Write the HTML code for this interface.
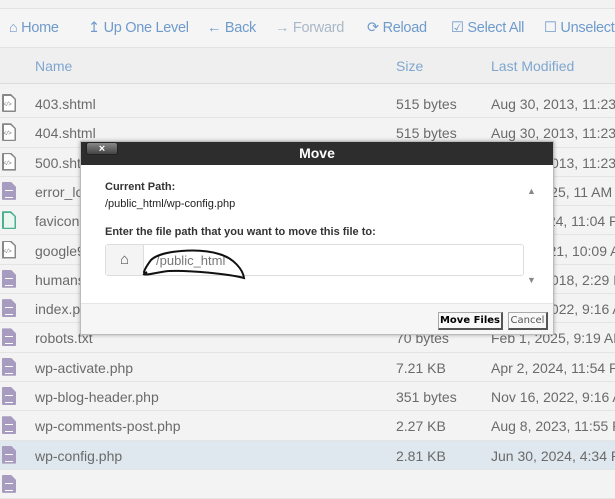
<!DOCTYPE html>
<html><head><style>
*{margin:0;padding:0;box-sizing:border-box}
body{width:615px;height:480px;overflow:hidden;background:#f2f2f2;font-family:"Liberation Sans",sans-serif;position:relative}
.tb{position:absolute;left:0;top:8px;width:615px;height:40px;background:#f5f5f5;border-top:1px solid #e2e2e2;border-bottom:1px solid #e2e2e2}
.tb span{position:absolute;top:11px;font-size:14.5px;color:#6f9bcc;letter-spacing:-0.3px;white-space:nowrap}
.tb span.dis{color:#a9b8c8}
.hd{position:absolute;left:0;top:48px;width:615px;height:36px;background:#efefef;border-bottom:1px solid #dcdcdc}
.hd span{position:absolute;top:10px;font-size:14px;color:#7fa6cf}
.row{position:absolute;left:0;width:615px;height:29.3px;border-bottom:1px solid #e4e4e4;background:#f3f3f3;font-size:14px;color:#6a6a6a}
.row.sel{background:#dfe8ee}
.row span{position:absolute;top:7px;white-space:nowrap}
.ic{position:absolute;left:2px;top:5px;width:14px;height:18px;border-radius:1px;clip-path:polygon(0 0,65% 0,100% 28%,100% 100%,0 100%)}
.doc{background:#a79bbf}
.doc:after{content:"";position:absolute;left:3px;top:8px;width:8px;height:6px;border-top:1.5px solid #fff;border-bottom:1.5px solid #fff}
.code{background:#888}
.code:before{content:"";position:absolute;left:1.5px;top:1.5px;right:1.5px;bottom:1.5px;background:#fff;clip-path:polygon(0 0,60% 0,100% 26%,100% 100%,0 100%)}
.code:after{content:"</>";position:absolute;left:1px;top:8px;font-size:6px;color:#777}
.img{background:#4bb08f}
.img:before{content:"";position:absolute;left:1.5px;top:1.5px;right:1.5px;bottom:1.5px;background:#eaf6f0;clip-path:polygon(0 0,60% 0,100% 26%,100% 100%,0 100%)}
.dlg{position:absolute;left:80px;top:141px;width:474px;height:194px;background:#fff;border:1px solid #bbb;box-shadow:0 0 4px rgba(0,0,0,.3)}
.tt{height:23px;background:#2d2d2d;color:#fff;font-weight:bold;font-size:14px;text-align:center;line-height:23px}
.x{position:absolute;left:5px;top:0px;width:32px;height:13px;background:linear-gradient(#888,#444);border-radius:3px;color:#fff;font-size:11px;font-weight:bold;line-height:12px;text-align:center;border:1px solid #222}
.lbl{position:absolute;font-size:11px;color:#222}
.inp{position:absolute;left:24px;top:102px;width:419px;height:32px;border:1px solid #ddd;border-radius:3px;background:#fff}
.hb{position:absolute;left:0;top:0;width:38px;height:30px;background:#f4f4f4;border-right:1px solid #ddd;text-align:center;line-height:30px;font-size:15px;color:#555}
.ft{position:absolute;left:0;bottom:0;width:472px;height:31px;background:#f6f6f6;border-top:1px solid #e6e6e6}
.btn{position:absolute;top:8px;height:18px;font-size:10px;line-height:16px;text-align:center;border:1px solid #aaa;border-right:2px solid #555;border-bottom:2px solid #555;background:#f8f8f8;font-family:"DejaVu Sans",sans-serif;overflow:hidden;white-space:nowrap}
</style></head><body>
<div class="tb">
<span style="left:9px">&#8962; Home</span>
<span style="left:88px">&#8613; Up One Level</span>
<span style="left:207px">&#8592; Back</span>
<span style="left:275px" class="dis">&#8594; Forward</span>
<span style="left:367px">&#10227; Reload</span>
<span style="left:451px">&#9745; Select All</span>
<span style="left:544px">&#9744; Unselect</span>
</div>
<div class="hd"><span style="left:35px">Name</span><span style="left:396px">Size</span><span style="left:491px">Last Modified</span></div>
<div class="row" style="top:89px"><i class="ic code"></i><span style="left:35px">403.shtml</span><span style="left:396px">515 bytes</span><span style="left:491px">Aug 30, 2013, 11:23 PM</span></div>
<div class="row" style="top:118.3px"><i class="ic code"></i><span style="left:35px">404.shtml</span><span style="left:396px">515 bytes</span><span style="left:491px">Aug 30, 2013, 11:23 PM</span></div>
<div class="row" style="top:147.6px"><i class="ic code"></i><span style="left:35px">500.shtml</span><span style="left:396px">515 bytes</span><span style="left:491px">Aug 30, 2013, 11:23 PM</span></div>
<div class="row" style="top:176.9px"><i class="ic doc"></i><span style="left:35px">error_log</span><span style="left:396px">1 KB</span><span style="left:491px">Feb 1, 2025, 11 AM</span></div>
<div class="row" style="top:206.2px"><i class="ic img"></i><span style="left:35px">favicon.ico</span><span style="left:396px">0 bytes</span><span style="left:491px">Apr 2, 2024, 11:04 PM</span></div>
<div class="row" style="top:235.5px"><i class="ic code"></i><span style="left:35px">google9.html</span><span style="left:396px">53 bytes</span><span style="left:491px">Jan 1, 2021, 10:09 AM</span></div>
<div class="row" style="top:264.8px"><i class="ic doc"></i><span style="left:35px">humans.txt</span><span style="left:396px">1 KB</span><span style="left:491px">Nov 18, 2018, 2:29 PM</span></div>
<div class="row" style="top:294.1px"><i class="ic doc"></i><span style="left:35px">index.php</span><span style="left:396px">405 bytes</span><span style="left:491px">Nov 16, 2022, 9:16 AM</span></div>
<div class="row" style="top:323.4px"><i class="ic doc"></i><span style="left:35px">robots.txt</span><span style="left:396px">70 bytes</span><span style="left:491px">Feb 1, 2025, 9:19 AM</span></div>
<div class="row" style="top:352.7px"><i class="ic doc"></i><span style="left:35px">wp-activate.php</span><span style="left:396px">7.21 KB</span><span style="left:491px">Apr 2, 2024, 11:54 PM</span></div>
<div class="row" style="top:382px"><i class="ic doc"></i><span style="left:35px">wp-blog-header.php</span><span style="left:396px">351 bytes</span><span style="left:491px">Nov 16, 2022, 9:16 AM</span></div>
<div class="row" style="top:411.3px"><i class="ic doc"></i><span style="left:35px">wp-comments-post.php</span><span style="left:396px">2.27 KB</span><span style="left:491px">Aug 8, 2023, 11:55 PM</span></div>
<div class="row sel" style="top:440.6px"><i class="ic doc"></i><span style="left:35px">wp-config.php</span><span style="left:396px">2.81 KB</span><span style="left:491px">Jun 30, 2024, 4:34 PM</span></div>
<div class="row" style="top:469.9px"><i class="ic doc"></i></div>

<div class="dlg">
<div class="tt">Move</div>
<div class="x">&#215;</div>
<div class="lbl" style="left:24px;top:39px;font-weight:bold;color:#333">Current Path:</div>
<div class="lbl" style="left:24px;top:56px">/public_html/wp-config.php</div>
<div class="lbl" style="left:24px;top:84px;font-weight:bold;color:#333">Enter the file path that you want to move this file to:</div>
<div class="inp"><div class="hb">&#8962;</div><span style="position:absolute;left:50px;top:8px;font-size:13px;color:#777">/public_html</span></div>
<svg style="position:absolute;left:58px;top:104px" width="110" height="34"><path d="M8 26 C2 30 6 22 12 14 C22 4 60 2 80 8 C95 12 104 24 105 32 C90 28 50 24 30 25 C18 26 8 30 4 28" fill="none" stroke="#111" stroke-width="2"/></svg>
<div style="position:absolute;left:446px;top:44px;font-size:9px;color:#888">&#9650;</div>
<div style="position:absolute;left:446px;top:133px;font-size:9px;color:#888">&#9660;</div>
<div class="ft">
<div class="btn" style="left:357px;width:65px;font-weight:bold">Move Files</div>
<div class="btn" style="left:427px;width:40px;color:#555">Cancel</div>
</div>
</div>
</body></html>
